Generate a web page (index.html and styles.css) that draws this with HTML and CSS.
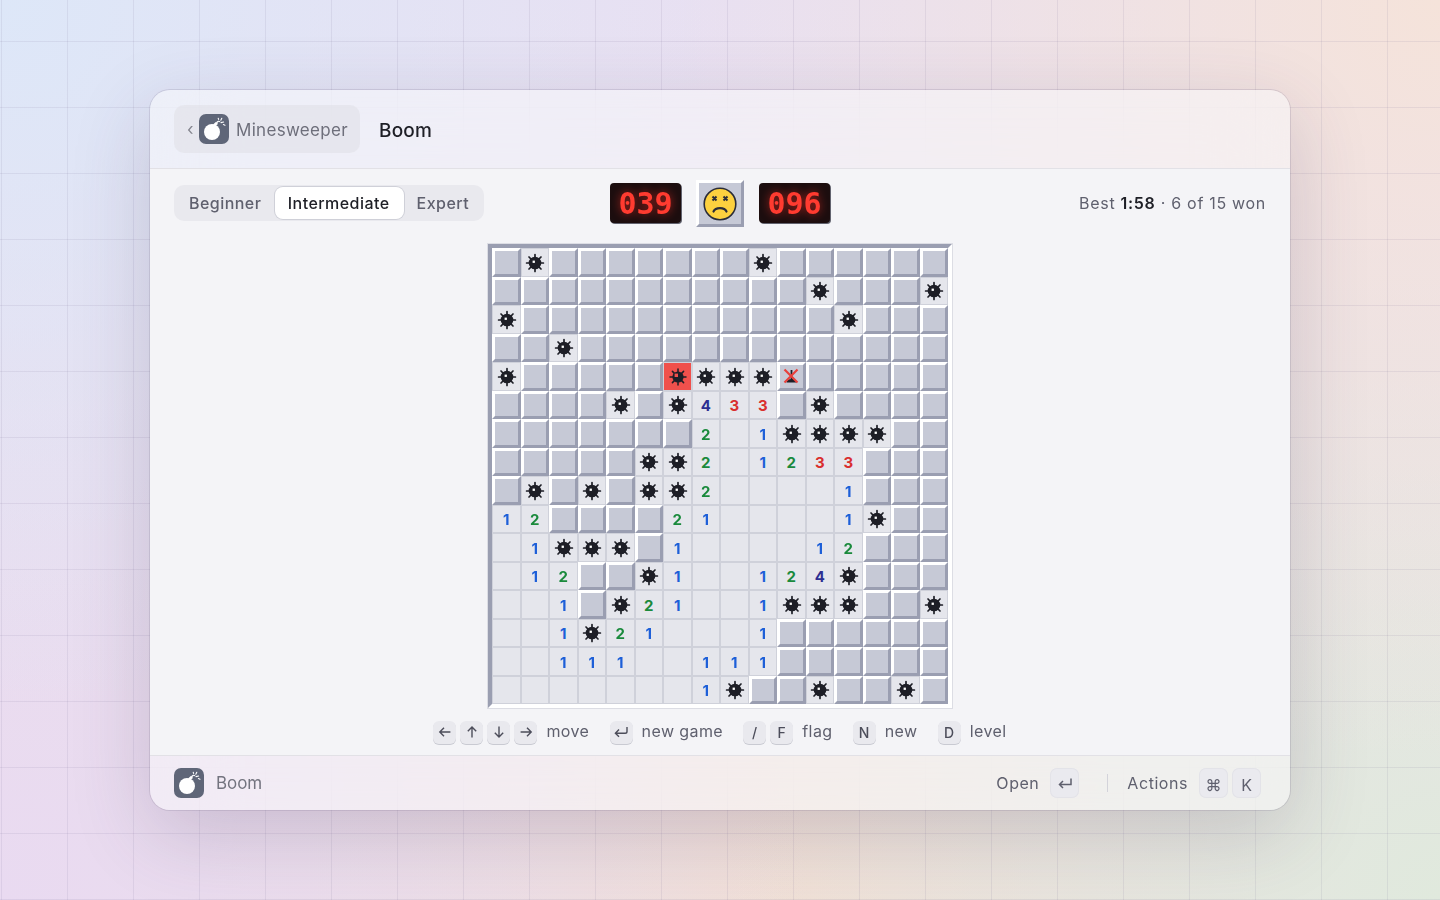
FILE: index.html
```html
<!DOCTYPE html>
<html lang="en">
<head>
<meta charset="utf-8">
<title>Minesweeper</title>
<link rel="stylesheet" href="styles.css">
</head>
<body>
<svg class="defs" width="0" height="0" aria-hidden="true">
  <symbol id="mine" viewBox="0 0 20 20">
    <g stroke="#1d1e26" stroke-width="1.7" stroke-linecap="round">
      <path d="M10 1.6V18.4M1.6 10H18.4M4 4L16 16M16 4L4 16"/>
    </g>
    <circle cx="10" cy="10" r="6.3" fill="#1d1e26"/>
    <rect x="7.6" y="7.6" width="2.3" height="2.3" fill="#fff"/>
  </symbol>
  <symbol id="bomb" viewBox="0 0 30 30">
    <circle cx="13" cy="18" r="8" fill="#fff"/>
    <path d="M15 11.5l3-2.6" stroke="#fff" stroke-width="2.8"/>
    <path d="M17.5 9.5c1-2.5 2.5-2.8 3.5-1.5" stroke="#fff" stroke-width="1.2" fill="none"/>
    <path d="M22 8.6l2.6-.6M21.8 6.2l1-2M24.4 10.6l1.6.6M19.6 5.4l-.4-1.2" stroke="#fff" stroke-width="1.1" stroke-linecap="round"/>
  </symbol>
</svg>
<div class="window">
  <header class="header">
    <div class="back">
      <span class="chev">‹</span>
      <svg class="appicon"><use href="#bomb"/></svg>
      <span class="backname">Minesweeper</span>
    </div>
    <h1 class="title">Boom</h1>
  </header>
  <main class="content">
    <div class="toolbar">
      <div class="levels">
        <span class="level">Beginner</span>
        <span class="level active">Intermediate</span>
        <span class="level">Expert</span>
      </div>
      <div class="scoreboard">
        <span class="led">039</span>
        <span class="face">
          <svg viewBox="0 0 34 34" width="34" height="34">
            <circle cx="17" cy="17" r="15.8" fill="#fdd13f" stroke="#2b2d38" stroke-width="1.6"/>
            <path d="M9.5 9.5l4 4M13.5 9.5l-4 4M20.5 9.5l4 4M24.5 9.5l-4 4" stroke="#2b2d38" stroke-width="2"/>
            <path d="M10.5 24.5c2-4.4 11-4.4 13 0" stroke="#2b2d38" stroke-width="2.2" fill="none" stroke-linecap="round"/>
          </svg>
        </span>
        <span class="led">096</span>
      </div>
      <div class="stats">Best <strong>1:58</strong> · 6 of 15 won</div>
    </div>
    <div class="board">
      <!-- r0 -->
      <span class="h"></span><span class="o"><svg><use href="#mine"/></svg></span><span class="h"></span><span class="h"></span><span class="h"></span><span class="h"></span><span class="h"></span><span class="h"></span><span class="h"></span><span class="o"><svg><use href="#mine"/></svg></span><span class="h"></span><span class="h"></span><span class="h"></span><span class="h"></span><span class="h"></span><span class="h"></span>
      <!-- r1 -->
      <span class="h"></span><span class="h"></span><span class="h"></span><span class="h"></span><span class="h"></span><span class="h"></span><span class="h"></span><span class="h"></span><span class="h"></span><span class="h"></span><span class="h"></span><span class="o"><svg><use href="#mine"/></svg></span><span class="h"></span><span class="h"></span><span class="h"></span><span class="o"><svg><use href="#mine"/></svg></span>
      <!-- r2 -->
      <span class="o"><svg><use href="#mine"/></svg></span><span class="h"></span><span class="h"></span><span class="h"></span><span class="h"></span><span class="h"></span><span class="h"></span><span class="h"></span><span class="h"></span><span class="h"></span><span class="h"></span><span class="h"></span><span class="o"><svg><use href="#mine"/></svg></span><span class="h"></span><span class="h"></span><span class="h"></span>
      <!-- r3 -->
      <span class="h"></span><span class="h"></span><span class="o"><svg><use href="#mine"/></svg></span><span class="h"></span><span class="h"></span><span class="h"></span><span class="h"></span><span class="h"></span><span class="h"></span><span class="h"></span><span class="h"></span><span class="h"></span><span class="h"></span><span class="h"></span><span class="h"></span><span class="h"></span>
      <!-- r4 -->
      <span class="o"><svg><use href="#mine"/></svg></span><span class="h"></span><span class="h"></span><span class="h"></span><span class="h"></span><span class="h"></span><span class="boom"><svg viewBox="0 0 20 20"><g stroke="#1d1e26" stroke-width="1.5" stroke-linecap="round"><path d="M10 2V18M2 10H18M4.4 4.4L15.6 15.6M15.6 4.4L4.4 15.6"/></g><circle cx="10" cy="10" r="5.6" fill="#1d1e26"/><rect x="6.6" y="6.6" width="3.4" height="3.4" fill="#f0504c"/></svg></span><span class="o"><svg><use href="#mine"/></svg></span><span class="o"><svg><use href="#mine"/></svg></span><span class="o"><svg><use href="#mine"/></svg></span><span class="h"><svg viewBox="0 0 20 20"><path d="M10.5 4v9" stroke="#1d1e26" stroke-width="1.8"/><path d="M5.5 16.5c0-2.2 2.2-3.5 5-3.5s5 1.3 5 3.5z" fill="#1d1e26"/><path d="M3.5 3.5L16.5 16.5M16.5 3.5L3.5 16.5" stroke="#e8403c" stroke-width="2.2"/></svg></span><span class="h"></span><span class="h"></span><span class="h"></span><span class="h"></span><span class="h"></span>
      <!-- r5 -->
      <span class="h"></span><span class="h"></span><span class="h"></span><span class="h"></span><span class="o"><svg><use href="#mine"/></svg></span><span class="h"></span><span class="o"><svg><use href="#mine"/></svg></span><span class="o n4">4</span><span class="o n3">3</span><span class="o n3">3</span><span class="h"></span><span class="o"><svg><use href="#mine"/></svg></span><span class="h"></span><span class="h"></span><span class="h"></span><span class="h"></span>
      <!-- r6 -->
      <span class="h"></span><span class="h"></span><span class="h"></span><span class="h"></span><span class="h"></span><span class="h"></span><span class="h"></span><span class="o n2">2</span><span class="o"></span><span class="o n1">1</span><span class="o"><svg><use href="#mine"/></svg></span><span class="o"><svg><use href="#mine"/></svg></span><span class="o"><svg><use href="#mine"/></svg></span><span class="o"><svg><use href="#mine"/></svg></span><span class="h"></span><span class="h"></span>
      <!-- r7 -->
      <span class="h"></span><span class="h"></span><span class="h"></span><span class="h"></span><span class="h"></span><span class="o"><svg><use href="#mine"/></svg></span><span class="o"><svg><use href="#mine"/></svg></span><span class="o n2">2</span><span class="o"></span><span class="o n1">1</span><span class="o n2">2</span><span class="o n3">3</span><span class="o n3">3</span><span class="h"></span><span class="h"></span><span class="h"></span>
      <!-- r8 -->
      <span class="h"></span><span class="o"><svg><use href="#mine"/></svg></span><span class="h"></span><span class="o"><svg><use href="#mine"/></svg></span><span class="h"></span><span class="o"><svg><use href="#mine"/></svg></span><span class="o"><svg><use href="#mine"/></svg></span><span class="o n2">2</span><span class="o"></span><span class="o"></span><span class="o"></span><span class="o"></span><span class="o n1">1</span><span class="h"></span><span class="h"></span><span class="h"></span>
      <!-- r9 -->
      <span class="o n1">1</span><span class="o n2">2</span><span class="h"></span><span class="h"></span><span class="h"></span><span class="h"></span><span class="o n2">2</span><span class="o n1">1</span><span class="o"></span><span class="o"></span><span class="o"></span><span class="o"></span><span class="o n1">1</span><span class="o"><svg><use href="#mine"/></svg></span><span class="h"></span><span class="h"></span>
      <!-- r10 -->
      <span class="o"></span><span class="o n1">1</span><span class="o"><svg><use href="#mine"/></svg></span><span class="o"><svg><use href="#mine"/></svg></span><span class="o"><svg><use href="#mine"/></svg></span><span class="h"></span><span class="o n1">1</span><span class="o"></span><span class="o"></span><span class="o"></span><span class="o"></span><span class="o n1">1</span><span class="o n2">2</span><span class="h"></span><span class="h"></span><span class="h"></span>
      <!-- r11 -->
      <span class="o"></span><span class="o n1">1</span><span class="o n2">2</span><span class="h"></span><span class="h"></span><span class="o"><svg><use href="#mine"/></svg></span><span class="o n1">1</span><span class="o"></span><span class="o"></span><span class="o n1">1</span><span class="o n2">2</span><span class="o n4">4</span><span class="o"><svg><use href="#mine"/></svg></span><span class="h"></span><span class="h"></span><span class="h"></span>
      <!-- r12 -->
      <span class="o"></span><span class="o"></span><span class="o n1">1</span><span class="h"></span><span class="o"><svg><use href="#mine"/></svg></span><span class="o n2">2</span><span class="o n1">1</span><span class="o"></span><span class="o"></span><span class="o n1">1</span><span class="o"><svg><use href="#mine"/></svg></span><span class="o"><svg><use href="#mine"/></svg></span><span class="o"><svg><use href="#mine"/></svg></span><span class="h"></span><span class="h"></span><span class="o"><svg><use href="#mine"/></svg></span>
      <!-- r13 -->
      <span class="o"></span><span class="o"></span><span class="o n1">1</span><span class="o"><svg><use href="#mine"/></svg></span><span class="o n2">2</span><span class="o n1">1</span><span class="o"></span><span class="o"></span><span class="o"></span><span class="o n1">1</span><span class="h"></span><span class="h"></span><span class="h"></span><span class="h"></span><span class="h"></span><span class="h"></span>
      <!-- r14 -->
      <span class="o"></span><span class="o"></span><span class="o n1">1</span><span class="o n1">1</span><span class="o n1">1</span><span class="o"></span><span class="o"></span><span class="o n1">1</span><span class="o n1">1</span><span class="o n1">1</span><span class="h"></span><span class="h"></span><span class="h"></span><span class="h"></span><span class="h"></span><span class="h"></span>
      <!-- r15 -->
      <span class="o"></span><span class="o"></span><span class="o"></span><span class="o"></span><span class="o"></span><span class="o"></span><span class="o"></span><span class="o n1">1</span><span class="o"><svg><use href="#mine"/></svg></span><span class="h"></span><span class="h"></span><span class="o"><svg><use href="#mine"/></svg></span><span class="h"></span><span class="h"></span><span class="o"><svg><use href="#mine"/></svg></span><span class="h"></span>
    </div>
    <div class="hints">
      <div class="hint">
        <span class="keys">
          <kbd class="key"><svg viewBox="0 0 14 14"><path d="M12.4 7H1.8M6 2.8L1.8 7 6 11.2" /></svg></kbd>
          <kbd class="key"><svg viewBox="0 0 14 14"><path d="M7 12.6V2M2.8 6.2L7 2l4.2 4.2" /></svg></kbd>
          <kbd class="key"><svg viewBox="0 0 14 14"><path d="M7 1.4V12M2.8 7.8L7 12l4.2-4.2" /></svg></kbd>
          <kbd class="key"><svg viewBox="0 0 14 14"><path d="M1.6 7h10.6M8 2.8L12.2 7 8 11.2" /></svg></kbd>
        </span>
        <span class="hinttext">move</span>
      </div>
      <div class="hint">
        <span class="keys"><kbd class="key"><svg viewBox="0 0 14 14"><path d="M13 2v4.4a1.8 1.8 0 0 1-1.8 1.8H1.4M5 4.6L1.4 8.2 5 11.8"/></svg></kbd></span>
        <span class="hinttext">new game</span>
      </div>
      <div class="hint">
        <span class="keys"><kbd class="key">/</kbd><kbd class="key">F</kbd></span>
        <span class="hinttext">flag</span>
      </div>
      <div class="hint">
        <span class="keys"><kbd class="key">N</kbd></span>
        <span class="hinttext">new</span>
      </div>
      <div class="hint">
        <span class="keys"><kbd class="key">D</kbd></span>
        <span class="hinttext">level</span>
      </div>
    </div>
  </main>
  <footer class="footer">
    <svg class="appicon"><use href="#bomb"/></svg>
    <span class="footname">Boom</span>
    <div class="actions">
      <span class="act">Open</span>
      <kbd class="fkey"><svg viewBox="0 0 16 16"><path d="M14 3.5v6H2.5M6 6L2.5 9.5 6 13"/></svg></kbd>
      <span class="sep"></span>
      <span class="act">Actions</span>
      <span class="fkeys"><kbd class="fkey low">⌘</kbd><kbd class="fkey low">K</kbd></span>
    </div>
  </footer>
</div>
</body>
</html>
```

FILE: styles.css
```css
* { box-sizing: border-box; }
html, body { height: 100%; }
body {
  margin: 0;
  height: 900px;
  overflow: hidden;
  display: flex;
  align-items: center;
  justify-content: center;
  font-family: Inter, "Liberation Sans", sans-serif;
  color: #5f606e;
  background-color: #ece4ee;
  background-image:
    linear-gradient(rgba(110,100,140,.11) 1px, transparent 1px),
    linear-gradient(90deg, rgba(110,100,140,.11) 1px, transparent 1px),
    radial-gradient(circle at 0% 0%, #dde7f8 0, rgba(221,231,248,0) 42%),
    radial-gradient(circle at 100% 0%, #f5e3da 0, rgba(245,227,218,0) 45%),
    radial-gradient(circle at 0% 100%, #e9daf1 0, rgba(233,218,241,0) 48%),
    radial-gradient(circle at 100% 100%, #e0e9dd 0, rgba(224,233,221,0) 42%),
    radial-gradient(circle at 55% 100%, #f2e0d6 0, rgba(242,224,214,0) 50%),
    linear-gradient(#e8e0f2, #ede2e8);
  background-size: 66px 66px, 66px 66px, auto, auto, auto, auto, auto, auto;
  background-position: 0 41px, 1px 0, 0 0, 0 0, 0 0, 0 0, 0 0, 0 0;
}
.defs { position: absolute; }
.window {
  width: 1140px;
  height: 720px;
  border-radius: 20px;
  overflow: hidden;
  display: flex;
  flex-direction: column;
  background: rgba(250,250,252,.52);
  backdrop-filter: blur(40px);
  box-shadow: 0 0 0 1px rgba(120,110,140,.2), 0 24px 80px rgba(70,55,90,.2);
}
.header {
  height: 79px;
  flex: none;
  display: flex;
  align-items: center;
  padding: 0 24px;
  gap: 19px;
  border-bottom: 1px solid #e2e1e6;
}
.back {
  width: 186px;
  height: 48px;
  display: flex;
  align-items: center;
  padding-left: 13px;
  border-radius: 10px;
  background: rgba(224,224,230,.55);
  color: #6e6f7b;
}
.chev { font-size: 17px; width: 12px; line-height: 1; color: #85868f; }
.appicon { width: 30px; height: 30px; border-radius: 7px; background: #5f6678; flex: none; }
.backname { font-size: 17px; margin-left: 7px; letter-spacing: .3px; padding-top: 2px; }
.title { margin: 0; padding-top: 3px; font-size: 19px; font-weight: 500; letter-spacing: .2px; color: #1e1f26; }

.content {
  flex: 1;
  background: #f4f4f7;
  display: flex;
  flex-direction: column;
  align-items: center;
  padding-top: 11px;
}
.toolbar {
  width: 100%;
  height: 47px;
  padding: 0 24px;
  display: grid;
  grid-template-columns: 1fr auto 1fr;
  align-items: start;
}
.levels {
  justify-self: start;
  margin-top: 5px;
  height: 36px;
  width: 310px;
  display: flex;
  align-items: center;
  padding: 0 2px;
  border-radius: 10px;
  background: #e9e9ee;
}
.level {
  font-size: 16px;
  font-weight: 500;
  letter-spacing: .45px;
  color: #5f606e;
  padding: 0 13.5px 0 13px;
  height: 32px;
  line-height: 32px;
}
.level.active {
  background: #fff;
  color: #1e1f26;
  border-radius: 8px;
  padding-right: 14px;
  box-shadow: 0 0 0 1px #cfd0d8;
}
.scoreboard { display: flex; align-items: flex-start; gap: 15px; }
.led {
  width: 71px;
  height: 40px;
  margin-top: 3px;
  border-radius: 4px;
  background: #1c0e0f;
  box-shadow: 1px 1px 0 #62636f;
  font-family: "DejaVu Sans Mono", monospace;
  font-size: 30px;
  font-weight: 700;
  line-height: 42px;
  text-align: center;
  color: #ff3b30;
  text-shadow: 0 0 10px rgba(255,50,40,.6);
}
.face {
  width: 48px;
  height: 47px;
  display: flex;
  align-items: center;
  justify-content: center;
  background: #c6c9d6;
  border: 3px solid;
  border-color: #fff #9a9eb1 #9a9eb1 #fff;
}
.stats { justify-self: end; margin-top: 13px; font-size: 16px; color: #5f606e; letter-spacing: .7px; }
.stats strong { font-weight: 600; color: #1e1f26; }

.board {
  width: 464px;
  margin-top: 17px;
  display: grid;
  grid-template-columns: repeat(16, 28.5px);
  grid-auto-rows: 28.5px;
  border: 4px solid;
  border-color: #9a9eb1 #fff #fff #9a9eb1;
  box-shadow: 0 0 0 1px #dcdde4;
}
.h, .o, .boom {
  display: flex;
  align-items: center;
  justify-content: center;
  font-size: 15px;
  font-weight: 700;
}
.h {
  background: #c6c9d6;
  border: 3px solid;
  border-color: #fff #9a9eb1 #9a9eb1 #fff;
}
.o {
  background: #e5e6ec;
  border: 1px solid #cfd1da;
  padding-top: 2px;
}
.boom { background: #f0504c; border: 1px solid #cfd1da; padding: 1px 0 0 1px; }
.o:has(svg) { padding: 1px 0 0 1px; }
.h svg, .o svg, .boom svg { width: 20px; height: 20px; flex: none; }
.n1 { color: #1d5fd8; }
.n2 { color: #1a8a3c; }
.n3 { color: #d92f2f; }
.n4 { color: #2d2f92; }

.hints {
  margin-top: 12px;
  height: 24px;
  display: flex;
  align-items: center;
  gap: 20.25px;
  font-size: 16px;
  letter-spacing: .4px;
  color: #5f606e;
}
.hint { display: flex; align-items: center; gap: 9px; }
.hinttext { margin-top: -2px; }
.keys { display: flex; gap: 4px; }
.key {
  width: 23px;
  height: 23px;
  display: flex;
  align-items: center;
  justify-content: center;
  border-radius: 6px;
  background: #e9e9ee;
  box-shadow: 0 1px 0 #c9cad2;
  font-family: Inter, sans-serif;
  font-size: 14px;
  font-weight: 500;
  color: #4c4d5a;
}
.key svg { width: 14px; height: 14px; fill: none; stroke: #4c4d5a; stroke-width: 1.4; }

.footer {
  height: 55px;
  flex: none;
  display: flex;
  align-items: center;
  padding: 0 29px 0 24px;
  border-top: 1px solid #e2e1e6;
}
.footname { font-size: 17px; margin-left: 12px; color: #73747f; letter-spacing: -.05px; }
.actions { margin-left: auto; display: flex; align-items: center; }
.act { font-size: 16px; color: #5f606e; letter-spacing: .55px; }
.fkey {
  width: 29px;
  height: 30px;
  display: flex;
  align-items: center;
  justify-content: center;
  margin-left: 11px;
  border-radius: 7px;
  background: #eaeaef;
  box-shadow: 0 0 0 1px #e3e3e8 inset;
  font-family: Inter, "DejaVu Sans", sans-serif;
  font-size: 16px;
  color: #5f606e;
}
.fkey.low { padding-top: 3px; }
.fkey svg { width: 16px; height: 16px; fill: none; stroke: #5f606e; stroke-width: 1.5; }
.fkeys { display: flex; }
.fkeys .fkey + .fkey { margin-left: 4px; }
.sep { width: 1px; height: 18px; background: #d3d3da; margin: 0 19px 0 28px; }
```
